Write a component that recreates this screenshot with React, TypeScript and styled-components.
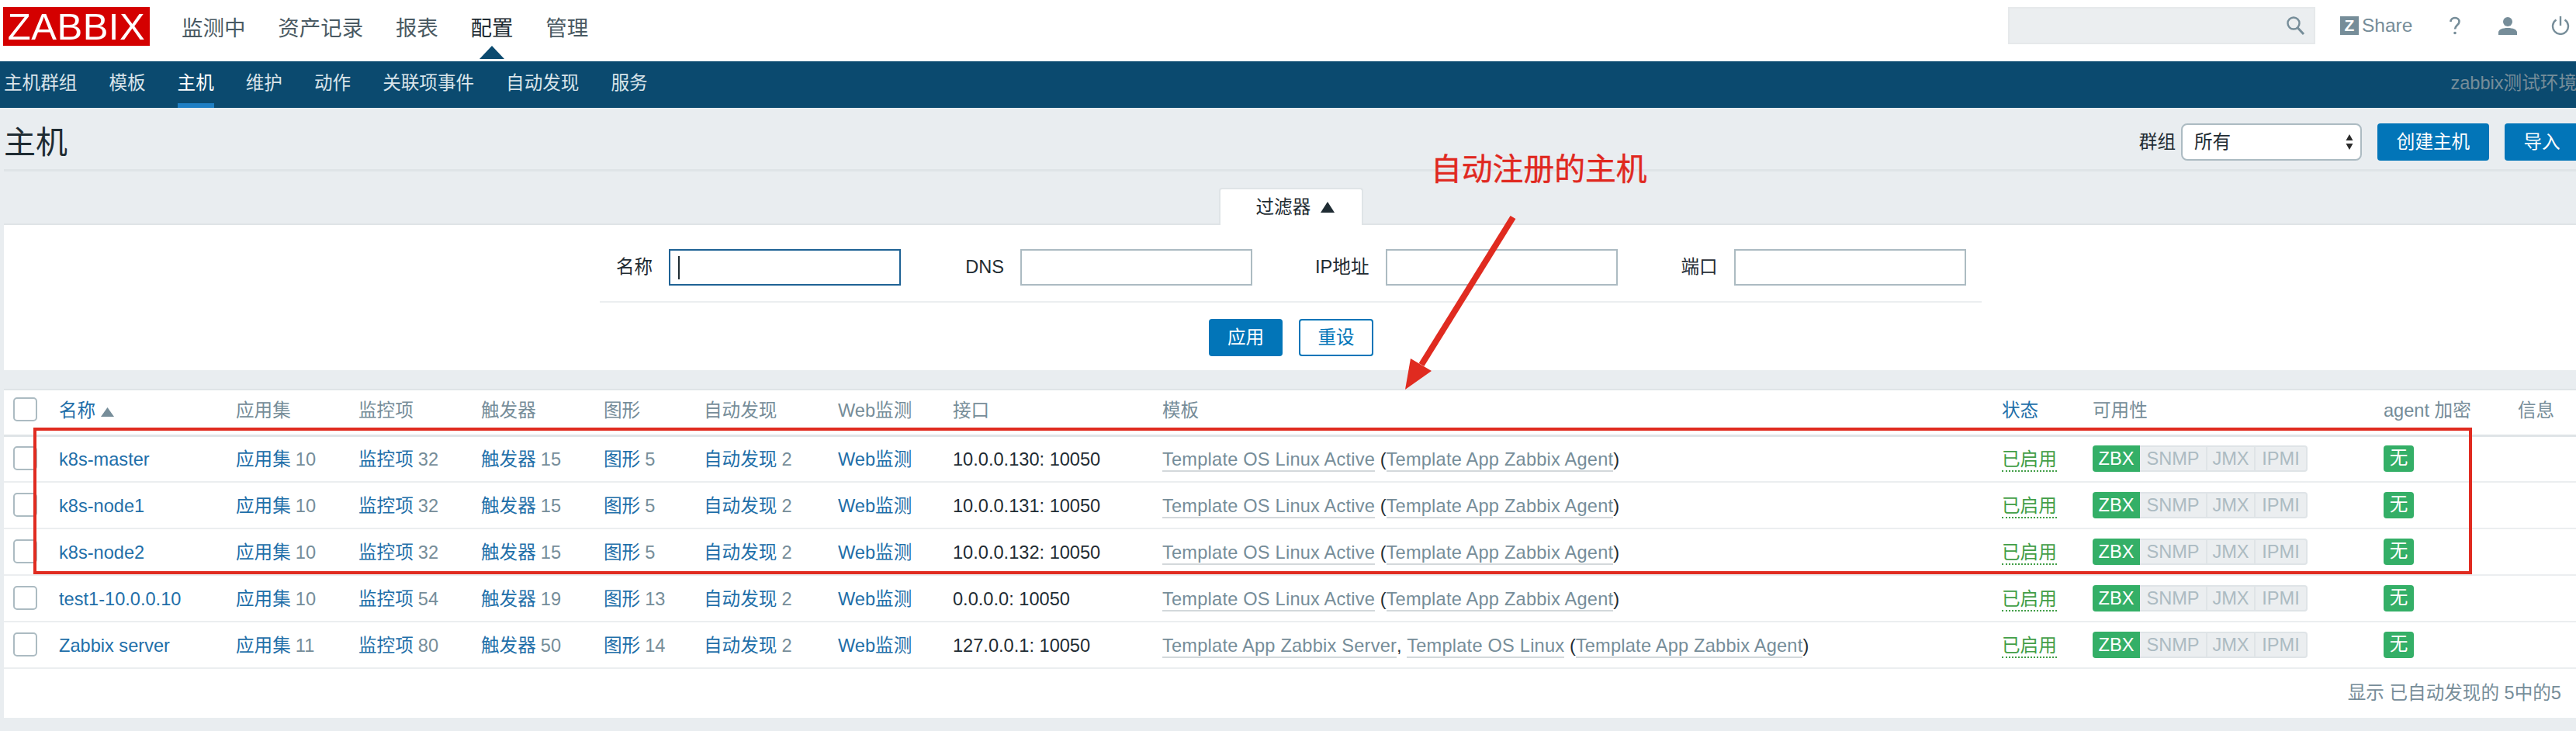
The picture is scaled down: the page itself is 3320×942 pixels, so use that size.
import styled, { createGlobalStyle } from "styled-components";

const GlobalStyle = createGlobalStyle`
  html, body {
    margin: 0;
    padding: 0;
    height: 942px;
    overflow: hidden;
    background: #e9edf0;
  }
  body {
    font-family: "Liberation Sans", "Noto Sans CJK SC", sans-serif;
    font-size: 23.6px;
    color: #1f2c33;
  }
`;

const Page = styled.div`
  position: relative;
  width: 3324px;
  height: 942px;
`;

const TopBar = styled.header`
  height: 79px;
  background: #fff;
  display: flex;
  align-items: flex-start;
  padding: 9px 12px 0 4px;
  box-sizing: border-box;
`;

const Logo = styled.div`
  width: 189px;
  height: 50px;
  background: #d40000;
  color: #fff;
  font-size: 49px;
  line-height: 51px;
  text-align: center;
  letter-spacing: 0.5px;
  flex: none;
`;

const MainNav = styled.nav`
  display: flex;
  gap: 41.7px;
  margin-left: 41px;
  height: 50px;
  align-items: center;
`;

const MainNavItem = styled.span<{ $active?: boolean }>`
  position: relative;
  font-size: 27.5px;
  color: ${(p) => (p.$active ? "#1f2c33" : "#4a5a63")};

  ${(p) =>
    p.$active &&
    `&::after {
      content: "";
      position: absolute;
      left: 50%;
      margin-left: -16px;
      top: 45px;
      border-left: 16px solid transparent;
      border-right: 16px solid transparent;
      border-bottom: 17px solid #0b4a6f;
    }`}
`;

const TopRight = styled.div`
  margin-left: auto;
  display: flex;
  align-items: center;
  height: 48px;
`;

const SearchBox = styled.div`
  width: 396px;
  height: 48px;
  box-sizing: border-box;
  background: #ebeef0;
  border: 2px solid #e6e9eb;
  display: flex;
  align-items: center;
  justify-content: flex-end;
  padding-right: 10px;
  margin-right: 32px;
`;

const ShareLink = styled.div`
  display: flex;
  align-items: center;
  gap: 4px;
  color: #768d99;
  font-size: 24.5px;
  width: 136px;
`;

const ZMark = styled.span`
  width: 24px;
  height: 24px;
  background: #768d99;
  color: #fff;
  font-size: 21px;
  font-weight: bold;
  line-height: 24px;
  text-align: center;
`;

const ToolIcon = styled.span`
  width: 24px;
  height: 24px;
  margin-right: 44px;
  display: flex;

  &:last-child {
    margin-right: 0;
  }
`;

const SubBar = styled.div`
  height: 60px;
  background: #0b4a6f;
  display: flex;
  align-items: stretch;
  padding-left: 5px;
  box-sizing: border-box;
`;

const SubNavItem = styled.span<{ $active?: boolean }>`
  margin-right: 41px;
  color: ${(p) => (p.$active ? "#fff" : "#d9e4ea")};
  line-height: 56px;
  box-sizing: border-box;
  border-bottom: 6px solid ${(p) => (p.$active ? "#1f7fc4" : "transparent")};
`;

const ServerName = styled.span`
  margin-left: auto;
  color: #768d99;
  line-height: 56px;
  margin-right: 3px;
`;

const Main = styled.main`
  padding-left: 5px;
`;

const TitleRow = styled.div`
  height: 82px;
  box-sizing: border-box;
  border-bottom: 3px solid #dfe4e7;
  display: flex;
  align-items: flex-start;
  padding-top: 20px;
`;

const Title = styled.h1`
  margin: 0;
  font-size: 41px;
  font-weight: normal;
  line-height: 50px;
  color: #1f2c33;
  margin-right: auto;
`;

const ControlLabel = styled.span`
  line-height: 48px;
  margin-right: 7px;
`;

const FakeSelect = styled.div`
  width: 233px;
  height: 48px;
  box-sizing: border-box;
  background: #fff;
  border: 2px solid #acbbc2;
  border-radius: 8px;
  padding: 0 8px 0 15px;
  line-height: 44px;
  display: flex;
  align-items: center;
  justify-content: space-between;
  margin-right: 20px;
`;

const PrimaryButton = styled.div<{ $w: number; $gap?: number }>`
  width: ${(p) => p.$w}px;
  height: 48px;
  margin-right: ${(p) => p.$gap ?? 0}px;
  background: #0275b8;
  color: #fff;
  border-radius: 4px;
  text-align: center;
  line-height: 48px;
`;

const OutlineButton = styled.div`
  width: 96px;
  height: 48px;
  box-sizing: border-box;
  background: #fff;
  color: #0275b8;
  border: 2px solid #0275b8;
  border-radius: 4px;
  text-align: center;
  line-height: 44px;
`;

const TabRow = styled.div`
  display: flex;
  justify-content: center;
  padding-top: 21px;
  padding-right: 2px;
`;

const FilterTab = styled.div`
  position: relative;
  width: 186px;
  height: 48px;
  margin-bottom: -2px;
  box-sizing: border-box;
  background: #fff;
  border: 2px solid #dfe4e7;
  border-bottom: none;
  border-radius: 4px 4px 0 0;
  padding-left: 46px;
  line-height: 46px;
  display: flex;
  align-items: center;
  gap: 13px;
`;

const FilterPanel = styled.section`
  background: #fff;
  height: 189px;
  box-sizing: border-box;
  padding-top: 31px;
  border-top: 2px solid #dfe4e7;
  display: flex;
  flex-direction: column;
  align-items: flex-start;
`;

const FilterFields = styled.div`
  display: flex;
  margin-left: 768px;
  width: 1781px;
  height: 69px;
  box-sizing: border-box;
  border-bottom: 2px solid #ebeef0;
  align-items: flex-start;
`;

const FieldLabel = styled.label<{ $left: number }>`
  margin-left: ${(p) => p.$left}px;
  line-height: 47px;
  margin-right: 21px;
`;

const FieldInput = styled.div<{ $focus?: boolean }>`
  width: 299px;
  height: 47px;
  box-sizing: border-box;
  background: #fff;
  border: 2px solid ${(p) => (p.$focus ? "#1f6295" : "#acbbc2")};
  padding: 7px 10px;
`;

const Caret = styled.div`
  width: 2px;
  height: 30px;
  background: #1f2c33;
`;

const FilterActions = styled.div`
  display: flex;
  margin-left: 1553px;
  margin-top: 21px;
  gap: 21px;
`;

const TablePanel = styled.section`
  margin-top: 24px;
  background: #fff;
  height: 424px;
  box-sizing: border-box;
  border-top: 2px solid #dfe4e7;
`;

const HostTable = styled.table`
  border-collapse: collapse;
  table-layout: fixed;
  width: 3319px;
`;

const HeadCell = styled.th<{ $link?: boolean }>`
  height: 58px;
  padding: 0 0 4px;
  box-sizing: border-box;
  text-align: left;
  font-weight: normal;
  line-height: 28px;
  color: ${(p) => (p.$link ? "#1f6fa9" : "#768d99")};
  border-bottom: 3px solid #dfe4e7;
  white-space: nowrap;
`;

const SortMark = styled.svg`
  margin-left: 7px;
`;

const Row = styled.tr`
  height: 60px;
  border-bottom: 2px solid #ebeef0;
`;

const Cell = styled.td`
  padding: 2px 0 0;
  line-height: 28px;
  white-space: nowrap;
  color: #1f2c33;
`;

const CheckBox = styled.div`
  margin-left: 12px;
  margin-top: -3px;
  width: 31px;
  height: 31px;
  box-sizing: border-box;
  border: 2px solid #acbbc2;
  border-radius: 5px;
  background: #fff;
`;

const HostLink = styled.a`
  color: #1f6fa9;
`;

const Count = styled.span`
  color: #768d99;
  margin-left: 6px;
`;

const TemplateLink = styled.a`
  color: #768d99;
  letter-spacing: 0.22px;
  border-bottom: 2px solid #d3d8db;
  padding-bottom: 1px;
`;

const StatusLink = styled.a`
  color: #429e47;
  border-bottom: 2px dotted #429e47;
  padding-bottom: 1px;
`;

const Availability = styled.div`
  display: flex;
  height: 34px;
  margin-top: -2px;
`;

const Chip = styled.span<{ $on?: boolean; $w: number }>`
  width: ${(p) => p.$w}px;
  box-sizing: border-box;
  text-align: center;
  line-height: ${(p) => (p.$on ? "35px" : "31px")};
  background: ${(p) => (p.$on ? "#34af67" : "#ebeef0")};
  color: ${(p) => (p.$on ? "#fff" : "#acbbc2")};
  border-right: ${(p) => (p.$on ? "none" : "2px solid #dfe4e7")};
  border-bottom: ${(p) => (p.$on ? "none" : "2px solid #dfe4e7")};
  border-top: ${(p) => (p.$on ? "none" : "2px solid #dfe4e7")};

  &:first-child {
    border-radius: 4px 0 0 4px;
  }
  &:last-child {
    border-radius: 0 4px 4px 0;
  }
`;

const NoneBadge = styled.span`
  display: block;
  width: 39px;
  height: 34px;
  margin-top: -2px;
  background: #34af67;
  color: #fff;
  border-radius: 4px;
  text-align: center;
  line-height: 33px;
`;

const Footer = styled.div`
  text-align: right;
  color: #768d99;
  padding-right: 23px;
  margin-top: 17px;
  line-height: 28px;
`;

const RedBox = styled.div`
  position: absolute;
  left: 43px;
  top: 551px;
  width: 3143px;
  height: 189px;
  box-sizing: border-box;
  border: 4px solid #e02b20;
  pointer-events: none;
`;

const Callout = styled.div`
  position: absolute;
  left: 1844px;
  top: 194px;
  font-size: 39.8px;
  line-height: 48px;
  color: #e0281f;
  -webkit-text-stroke: 0.4px #e0281f;
`;

const ArrowLayer = styled.svg`
  position: absolute;
  left: 0;
  top: 0;
  pointer-events: none;
`;

const widths = [71, 228, 158, 158, 158, 129, 173, 148, 270, 1082, 117, 375, 173, 79];

const hosts = [
  { name: "k8s-master", apps: 10, items: 32, trig: 15, graphs: 5, ip: "10.0.0.130: 10050" },
  { name: "k8s-node1", apps: 10, items: 32, trig: 15, graphs: 5, ip: "10.0.0.131: 10050" },
  { name: "k8s-node2", apps: 10, items: 32, trig: 15, graphs: 5, ip: "10.0.0.132: 10050" },
  { name: "test1-10.0.0.10", apps: 10, items: 54, trig: 19, graphs: 13, ip: "0.0.0.0: 10050" },
  { name: "Zabbix server", apps: 11, items: 80, trig: 50, graphs: 14, ip: "127.0.0.1: 10050", server: true },
];

const App = () => {
  return (
    <>
      <GlobalStyle />
      <Page>
        <TopBar>
          <Logo>ZABBIX</Logo>
          <MainNav>
            <MainNavItem>监测中</MainNavItem>
            <MainNavItem>资产记录</MainNavItem>
            <MainNavItem>报表</MainNavItem>
            <MainNavItem $active>配置</MainNavItem>
            <MainNavItem>管理</MainNavItem>
          </MainNav>
          <TopRight>
            <SearchBox>
              <svg width="26" height="26" viewBox="0 0 26 26" fill="none" stroke="#768d99">
                <circle cx="10" cy="10" r="7.5" strokeWidth="2.4" />
                <path d="M15 15.5l8 8.5" strokeWidth="3" />
              </svg>
            </SearchBox>
            <ShareLink>
              <ZMark>Z</ZMark>
              Share
            </ShareLink>
            <ToolIcon>
              <svg width="24" height="24" viewBox="0 0 24 24" fill="none" stroke="#768d99">
                <path d="M6.500 7c0-3 2.200-5 5.500-5s5.500 2 5.500 5c0 4-5.500 4.500-5.500 9.500" strokeWidth="2.6" />
                <circle cx="12" cy="21.500" r="1.800" fill="#768d99" stroke="none" />
              </svg>
            </ToolIcon>
            <ToolIcon>
              <svg width="24" height="24" viewBox="0 0 24 24" fill="#768d99">
                <circle cx="12" cy="7" r="6" />
                <path d="M0 24v-3c0-4 5-6 12-6s12 2 12 6v3z" />
              </svg>
            </ToolIcon>
            <ToolIcon>
              <svg width="24" height="24" viewBox="0 0 24 24" fill="none" stroke="#768d99" strokeWidth="2.4">
                <path d="M12 0v12" />
                <path d="M6.500 4.500a10 10 0 1 0 11 0" />
              </svg>
            </ToolIcon>
          </TopRight>
        </TopBar>
        <SubBar>
          {["主机群组", "模板", "主机", "维护", "动作", "关联项事件", "自动发现", "服务"].map((t) => (
            <SubNavItem key={t} $active={t === "主机"}>
              {t}
            </SubNavItem>
          ))}
          <ServerName>zabbix测试环境</ServerName>
        </SubBar>
        <Main>
          <TitleRow>
            <Title>主机</Title>
            <ControlLabel>群组</ControlLabel>
            <FakeSelect>
              所有
              <svg width="12" height="24" viewBox="0 0 12 24" fill="#2b2b2b">
                <path d="M6 2l4.500 8h-9z" />
                <path d="M6 22l4.500-8h-9z" />
              </svg>
            </FakeSelect>
            <PrimaryButton $w={144} $gap={20}>
              创建主机
            </PrimaryButton>
            <PrimaryButton $w={96}>导入</PrimaryButton>
          </TitleRow>
          <TabRow>
            <FilterTab>
              过滤器
              <svg width="18" height="14" viewBox="0 0 18 14" fill="#1f2c33">
                <path d="M9 0l9 14H0z" />
              </svg>
            </FilterTab>
          </TabRow>
          <FilterPanel>
            <FilterFields>
              <FieldLabel $left={21}>名称</FieldLabel>
              <FieldInput $focus>
                <Caret />
              </FieldInput>
              <FieldLabel $left={83}>DNS</FieldLabel>
              <FieldInput />
              <FieldLabel $left={81}>IP地址</FieldLabel>
              <FieldInput />
              <FieldLabel $left={82}>端口</FieldLabel>
              <FieldInput />
            </FilterFields>
            <FilterActions>
              <PrimaryButton $w={95}>应用</PrimaryButton>
              <OutlineButton>重设</OutlineButton>
            </FilterActions>
          </FilterPanel>
          <TablePanel>
            <HostTable>
              <colgroup>
                {widths.map((w, i) => (
                  <col key={i} style={{ width: w }} />
                ))}
              </colgroup>
              <thead>
                <tr>
                  <HeadCell>
                    <CheckBox />
                  </HeadCell>
                  <HeadCell $link>
                    名称
                    <SortMark width="17" height="12" viewBox="0 0 17 12" fill="#768d99">
                      <path d="M8.500 0L17 12H0z" />
                    </SortMark>
                  </HeadCell>
                  <HeadCell>应用集</HeadCell>
                  <HeadCell>监控项</HeadCell>
                  <HeadCell>触发器</HeadCell>
                  <HeadCell>图形</HeadCell>
                  <HeadCell>自动发现</HeadCell>
                  <HeadCell>Web监测</HeadCell>
                  <HeadCell>接口</HeadCell>
                  <HeadCell>模板</HeadCell>
                  <HeadCell $link>状态</HeadCell>
                  <HeadCell>可用性</HeadCell>
                  <HeadCell>agent 加密</HeadCell>
                  <HeadCell>信息</HeadCell>
                </tr>
              </thead>
              <tbody>
                {hosts.map((h) => (
                  <Row key={h.name}>
                    <Cell>
                      <CheckBox />
                    </Cell>
                    <Cell>
                      <HostLink>{h.name}</HostLink>
                    </Cell>
                    <Cell>
                      <HostLink>应用集</HostLink>
                      <Count>{h.apps}</Count>
                    </Cell>
                    <Cell>
                      <HostLink>监控项</HostLink>
                      <Count>{h.items}</Count>
                    </Cell>
                    <Cell>
                      <HostLink>触发器</HostLink>
                      <Count>{h.trig}</Count>
                    </Cell>
                    <Cell>
                      <HostLink>图形</HostLink>
                      <Count>{h.graphs}</Count>
                    </Cell>
                    <Cell>
                      <HostLink>自动发现</HostLink>
                      <Count>2</Count>
                    </Cell>
                    <Cell>
                      <HostLink>Web监测</HostLink>
                    </Cell>
                    <Cell>{h.ip}</Cell>
                    <Cell>
                      {h.server ? (
                        <>
                          <TemplateLink>Template App Zabbix Server</TemplateLink>, <TemplateLink>Template OS Linux</TemplateLink>
                        </>
                      ) : (
                        <TemplateLink>Template OS Linux Active</TemplateLink>
                      )}{" "}
                      (<TemplateLink>Template App Zabbix Agent</TemplateLink>)
                    </Cell>
                    <Cell>
                      <StatusLink>已启用</StatusLink>
                    </Cell>
                    <Cell>
                      <Availability>
                        <Chip $on $w={61}>ZBX</Chip>
                        <Chip $w={87}>SNMP</Chip>
                        <Chip $w={62}>JMX</Chip>
                        <Chip $w={67}>IPMI</Chip>
                      </Availability>
                    </Cell>
                    <Cell>
                      <NoneBadge>无</NoneBadge>
                    </Cell>
                    <Cell />
                  </Row>
                ))}
              </tbody>
            </HostTable>
            <Footer>显示 已自动发现的 5中的5</Footer>
          </TablePanel>
        </Main>
        <Callout>自动注册的主机</Callout>
        <RedBox />
        <ArrowLayer width="3320" height="942" viewBox="0 0 3320 942">
          <path d="M1950 280L1832 470" stroke="#e02b20" strokeWidth="8" fill="none" />
          <path d="M1811 502L1818 462L1845 478z" fill="#e02b20" />
        </ArrowLayer>
      </Page>
    </>
  );
};

export default App;
